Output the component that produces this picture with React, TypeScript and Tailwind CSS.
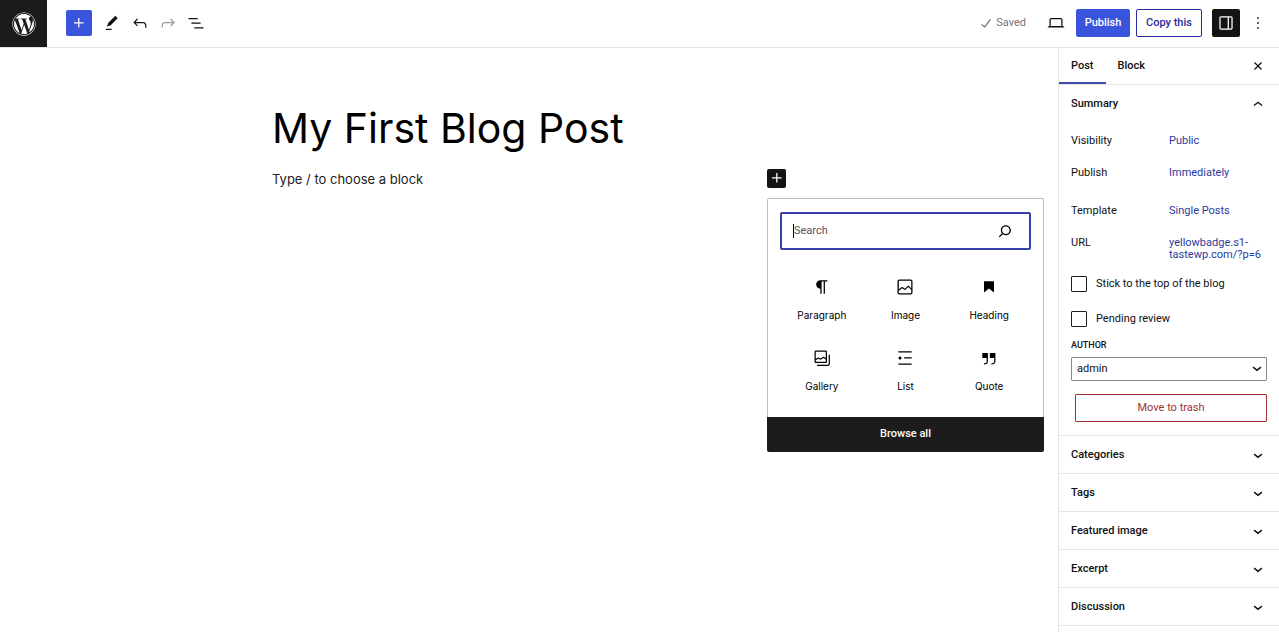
import { useState } from "react";
import { FaWordpress } from "react-icons/fa";

const paths = {
  plus: "M11 12.5V17.5H12.5V12.5H17.5V11H12.5V6H11V11H6V12.5H11Z",
  edit: "M18.8 6.2 16 3.4 7.6 11.8l-1.8 4.6 4.6-1.8L18.8 6.2zM4.6 20.3h7v-1.5h-7v1.5z",
  undo: "M18.3 11.7c-.6-.6-1.4-.9-2.3-.9H6.7l2.9-3.3-1.1-1-4.5 5L8.5 16l1-1-2.7-2.7H16c.5 0 .9.2 1.3.5 1 1 1 3.4 1 4.5v.3h1.5v-.2c0-1.5 0-4.3-1.5-5.7z",
  redo: "M15.6 6.5l-1.1 1 2.9 3.3H8c-.9 0-1.7.3-2.3.9-1.4 1.5-1.4 4.2-1.4 5.6v.2h1.5v-.3c0-1.1 0-3.5 1-4.5.3-.3.7-.5 1.3-.5h9.2L14.5 15l1.1 1.1 4.6-4.6-4.6-5z",
  overview: "M3 6h11v1.5H3V6Zm3.5 5.5h11V13h-11v-1.5ZM21 17H10v1.5h11V17Z",
  check: "M16.7 7.1l-6.3 8.5-3.3-2.5-.9 1.2 4.5 3.4L17.9 8z",
  laptop: "M20.5 16h-.7V8c0-1.1-.9-2-2-2H6.2c-1.1 0-2 .9-2 2v8h-.7c-.8 0-1.5.7-1.5 1.5h20c0-.8-.7-1.5-1.5-1.5zM5.7 8c0-.3.2-.5.5-.5h11.6c.3 0 .5.2.5.5v7.6H5.7V8z",
  drawer: "M18 4H6c-1.1 0-2 .9-2 2v12c0 1.1.9 2 2 2h12c1.1 0 2-.9 2-2V6c0-1.1-.9-2-2-2zm-4 14.5H6c-.3 0-.5-.2-.5-.5V6c0-.3.2-.5.5-.5h8v13zm4.5-.5c0 .3-.2.5-.5.5h-2.5v-13H18c.3 0 .5.2.5.5v12z",
  more: "M13 19h-2v-2h2v2zm0-6h-2v-2h2v2zm0-6h-2V5h2v2z",
  close: "M12 13.06l3.712 3.713 1.061-1.06L13.061 12l3.712-3.712-1.06-1.06L12 10.938 8.288 7.227l-1.061 1.06L10.939 12l-3.712 3.712 1.06 1.061L12 13.061z",
  up: "M6.6 12L12 7.8l5.4 4.2-.9 1.2L12 9.8l-4.5 3.4z",
  down: "M17.2 10.4L12 14.6l-5.2-4.2 1-1.3L12 12.4l4.2-3.3z",
  search: "M13 5c-3.3 0-6 2.7-6 6 0 1.4.5 2.7 1.3 3.7l-3.8 3.8 1.1 1.1 3.8-3.8c1 .8 2.3 1.3 3.7 1.3 3.3 0 6-2.7 6-6S16.3 5 13 5zm0 10.5c-2.5 0-4.5-2-4.5-4.5s2-4.5 4.5-4.5 4.5 2 4.5 4.5-2 4.5-4.5 4.5z",
  paragraph: "m9.996 14v-.225l.004 0v6.225h1.5v-14.5h2.5v14.5h1.5v-14.5h3v-1.5h-8.504c-2.761 0-5 2.239-5 5 0 2.761 2.239 5 5 5z",
  image: "M19 3H5c-1.1 0-2 .9-2 2v14c0 1.1.9 2 2 2h14c1.1 0 2-.9 2-2V5c0-1.1-.9-2-2-2zM5 4.5h14c.3 0 .5.2.5.5v8.4l-3-2.9c-.3-.3-.8-.3-1 0L11.9 14 9 12c-.3-.2-.6-.2-.8 0l-3.6 2.6V5c-.1-.3.1-.5.4-.5zm14 15H5c-.3 0-.5-.2-.5-.5v-2.4l4.1-3 3 1.9c.3.2.7.2.9-.1L16 12l3.5 3.4V19c0 .3-.2.5-.5.5z",
  heading: "M6 5V18.5911L12 13.8473L18 18.5911V5H6Z",
  gallery: "M16.375 4.5H4.625a.125.125 0 0 0-.125.125v8.254l2.859-1.54a.75.75 0 0 1 .68-.016l2.384 1.142 2.89-2.074a.75.75 0 0 1 .874 0l2.313 1.66V4.625a.125.125 0 0 0-.125-.125Zm.125 9.398-2.75-1.975-2.813 2.02a.75.75 0 0 1-.76.067l-2.444-1.17L4.5 14.583v1.792c0 .069.056.125.125.125h11.75a.125.125 0 0 0 .125-.125v-2.477ZM4.625 3C3.728 3 3 3.728 3 4.625v11.75C3 17.273 3.728 18 4.625 18h11.75c.898 0 1.625-.727 1.625-1.625V4.625C18 3.728 17.273 3 16.375 3H4.625ZM20 8v11c0 .69-.31 1-.999 1H6v1.5h13.001c1.52 0 2.499-.982 2.499-2.5V8H20Z",
  list: "M4 4h16v1.5H4V4Zm7 7.2h9v1.5h-9v-1.5ZM4 18.5h16V20H4v-1.5ZM6 10.2a1.8 1.8 0 1 0 0 3.6 1.8 1.8 0 0 0 0-3.6Z",
  quote: "M13 6v6h5.2v4c0 .8-.2 1.4-.5 1.7-.6.6-1.6.6-2.5.5h-.3v1.5h.5c1 0 2.3-.1 3.3-1 .6-.6 1-1.6 1-2.8V6H13zm-9 6h5.2v4c0 .8-.2 1.4-.5 1.7-.6.6-1.6.6-2.5.5h-.3v1.5h.5c1 0 2.3-.1 3.3-1 .6-.6 1-1.6 1-2.8V6H4v6z",
};

type IconName = keyof typeof paths;

function Icon({ name }: { name: IconName }) {
  return (
    <svg viewBox="0 0 24 24" className="size-5 shrink-0" fill="currentColor" fillRule="evenodd" aria-hidden="true">
      <path d={paths[name]} />
    </svg>
  );
}

function ToolButton({ name, label, muted }: { name: IconName; label: string; muted?: boolean }) {
  return (
    <button
      type="button"
      aria-label={label}
      disabled={muted}
      className="flex h-7 w-5 items-center justify-center disabled:text-[#9a9a9a]"
    >
      <Icon name={name} />
    </button>
  );
}

const blocks: { icon: IconName; label: string }[] = [
  { icon: "paragraph", label: "Paragraph" },
  { icon: "image", label: "Image" },
  { icon: "heading", label: "Heading" },
  { icon: "gallery", label: "Gallery" },
  { icon: "list", label: "List" },
  { icon: "quote", label: "Quote" },
];

const sections = ["Categories", "Tags", "Featured image", "Excerpt", "Discussion"];

function Header() {
  return (
    <header className="flex h-12 shrink-0 items-center border-b border-[#e4e4e4]">
      <a
        href="#dashboard"
        aria-label="View posts"
        className="flex w-[47px] items-center justify-center self-stretch bg-[#1b1b1b] text-white"
      >
        <FaWordpress className="size-6" />
      </a>
      <div className="flex items-center gap-2 pb-px pl-[19px]">
        <button
          type="button"
          aria-label="Add block"
          className="mr-0.5 flex size-[26px] items-center justify-center rounded-xs bg-[#3b54dc] text-white"
        >
          <Icon name="plus" />
        </button>
        <ToolButton name="edit" label="Tools" />
        <ToolButton name="undo" label="Undo" />
        <ToolButton name="redo" label="Redo" muted />
        <ToolButton name="overview" label="Document overview" />
      </div>
      <div className="ml-auto flex items-center pb-px pr-[11px] leading-7">
        <span className="flex items-center text-[#757575]">
          <Icon name="check" />
          Saved
        </span>
        <div className="ml-5 mr-2.5 flex">
          <ToolButton name="laptop" label="Preview" />
        </div>
        <button type="button" className="h-7 min-w-[54px] rounded-xs bg-[#3b54dc] px-2 font-medium text-white">
          Publish
        </button>
        <button
          type="button"
          className="ml-1.5 flex h-7 min-w-[66px] items-center justify-center rounded-xs border border-[#2a2aa0] px-2 font-medium text-[#2a2aa0]"
        >
          Copy this
        </button>
        <button
          type="button"
          aria-label="Settings"
          aria-pressed="true"
          className="ml-2.5 mr-2 flex size-7 items-center justify-center rounded-xs bg-[#141414] text-white"
        >
          <Icon name="drawer" />
        </button>
        <ToolButton name="more" label="Options" />
      </div>
    </header>
  );
}

function Inserter() {
  return (
    <div className="absolute left-0 top-[29px] w-[277px] rounded-xs bg-white text-black">
      <div className="rounded-t-xs border border-b-0 border-[#bdbdbd] px-3 pb-2.5 pt-[13px]">
        <div className="flex h-[38px] items-center rounded-xs border-2 border-[#3940a8] pl-[11px] pr-3.5">
          <span className="h-3.5 w-px bg-black" />
          <input
            type="search"
            aria-label="Search"
            placeholder="Search"
            className="h-5 min-w-0 flex-1 outline-none placeholder:text-[#555]"
          />
          <Icon name="search" />
        </div>
        <div className="grid grid-cols-3 pt-[15px]">
          {blocks.map((block) => (
            <button
              key={block.label}
              type="button"
              className="flex h-[71px] flex-col items-center justify-center gap-2.5 font-['Inter',sans-serif] text-[10px] leading-4"
            >
              <Icon name={block.icon} />
              {block.label}
            </button>
          ))}
        </div>
      </div>
      <button type="button" className="h-[35px] w-full rounded-b-xs bg-[#1c1c1c] font-medium text-white">
        Browse all
      </button>
    </div>
  );
}

function Canvas() {
  return (
    <main className="min-w-0 flex-1">
      <div className="mx-auto w-full max-w-[514px] pt-[52px]">
        <h1 className="font-['Inter',sans-serif] text-[41px] leading-14 text-black">My First Blog Post</h1>
        <div className="mt-3 flex h-5 items-center justify-between">
          <p className="mt-1 font-['Inter',sans-serif] text-[13px] text-[#222]">Type / to choose a block</p>
          <div className="relative">
            <button
              type="button"
              aria-label="Add block"
              className="flex size-[19px] items-center justify-center rounded-xs bg-[#141414] text-white"
            >
              <Icon name="plus" />
            </button>
            <Inserter />
          </div>
        </div>
      </div>
    </main>
  );
}

function SummaryRow({ label, value }: { label: string; value: string }) {
  return (
    <div className="flex items-start">
      <dt className="w-[98px] shrink-0">{label}</dt>
      <dd className="min-w-0 flex-1">
        <a href="#edit" className="block leading-3 text-[#2b3aa0]">
          {value}
        </a>
      </dd>
    </div>
  );
}

function CheckRow({ label }: { label: string }) {
  return (
    <label className="flex items-center gap-[9px] leading-4">
      <input type="checkbox" className="size-4 appearance-none rounded-[1px] border border-[#1e1e1e] checked:bg-[#3b54dc]" />
      {label}
    </label>
  );
}

function Sidebar() {
  const [author, setAuthor] = useState("admin");
  return (
    <aside className="w-[221px] shrink-0 border-l border-[#e4e4e4]">
      <div className="flex h-[37px] items-stretch border-b border-[#e4e4e4] pr-[11px] font-medium">
        <button type="button" className="border-b-2 border-[#3f4cab] px-3 pt-0.5">
          Post
        </button>
        <button type="button" className="border-b-2 border-transparent px-3 pt-0.5">
          Block
        </button>
        <button type="button" aria-label="Close settings" className="ml-auto flex items-center">
          <Icon name="close" />
        </button>
      </div>
      <section className="px-3 pb-[13px] pr-[11px]">
        <button type="button" className="flex h-[37px] w-full items-center justify-between pt-0.5 font-medium">
          Summary
          <Icon name="up" />
        </button>
        <dl className="flex flex-col gap-5 pt-[13px] leading-3">
          <SummaryRow label="Visibility" value="Public" />
          <SummaryRow label="Publish" value="Immediately" />
          <div className="pt-1.5">
            <SummaryRow label="Template" value="Single Posts" />
          </div>
          <SummaryRow label="URL" value="yellowbadge.s1-tastewp.com/?p=6" />
        </dl>
        <div className="mt-[15px] flex flex-col gap-[19px]">
          <CheckRow label="Stick to the top of the blog" />
          <CheckRow label="Pending review" />
        </div>
        <label htmlFor="author" className="mt-3 block text-[9px] font-medium leading-3 uppercase">
          Author
        </label>
        <div className="mt-1.5 grid items-center pr-px">
          <select
            id="author"
            value={author}
            onChange={(event) => setAuthor(event.target.value)}
            className="col-start-1 row-start-1 h-6 w-full appearance-none rounded-[1px] border border-[#8a8a8a] px-[5px]"
          >
            <option>admin</option>
          </select>
          <span className="pointer-events-none col-start-1 row-start-1 justify-self-end">
            <Icon name="down" />
          </span>
        </div>
        <div className="pl-1 pr-px pt-[13px]">
          <button type="button" className="h-7 w-full rounded-[1px] border border-[#a03030] text-[#a03030]">
            Move to trash
          </button>
        </div>
      </section>
      {sections.map((title) => (
        <button
          key={title}
          type="button"
          className="flex h-[38px] w-full items-center justify-between border-t border-[#e4e4e4] pl-3 pr-[11px] pt-0.5 font-medium"
        >
          {title}
          <Icon name="down" />
        </button>
      ))}
      <div className="border-t border-[#e4e4e4]" />
    </aside>
  );
}

export default function App() {
  return (
    <div className="flex min-h-screen flex-col bg-white font-['Roboto',sans-serif] text-[11px] text-[#111]">
      <Header />
      <div className="flex flex-1">
        <Canvas />
        <Sidebar />
      </div>
    </div>
  );
}
